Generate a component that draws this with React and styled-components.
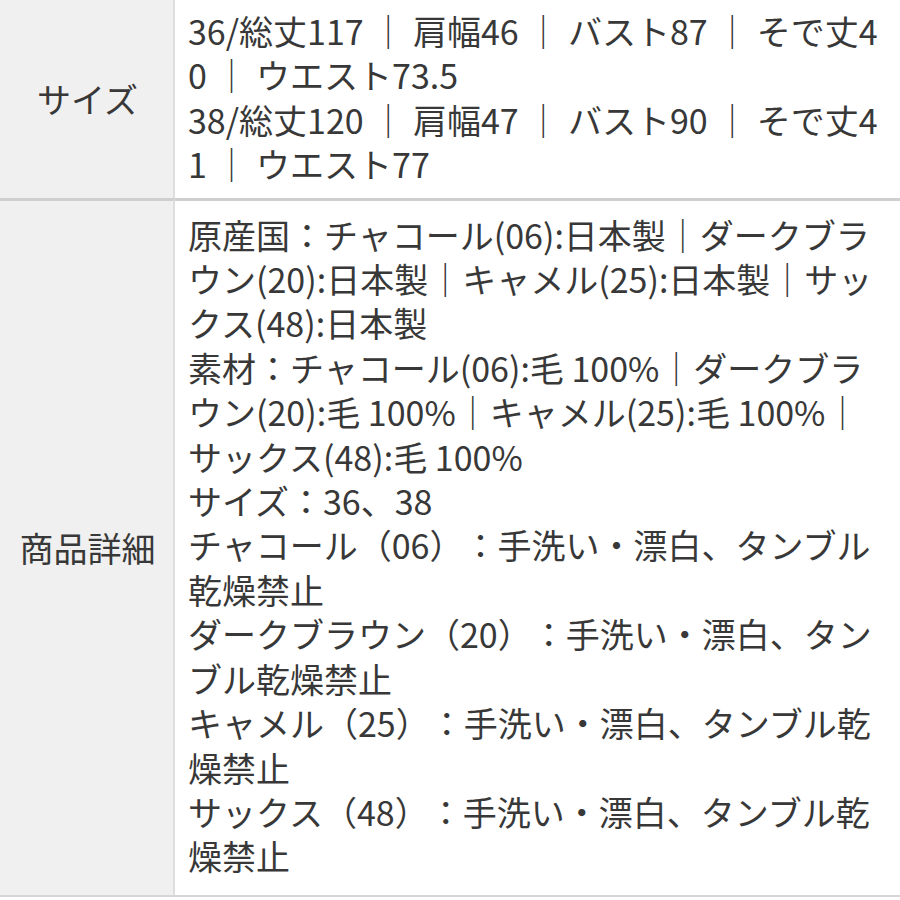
import styled, { createGlobalStyle } from 'styled-components';

const GlobalStyle = createGlobalStyle`
  body {
    margin: 0;
    background: #fff;
    font-family: "Noto Sans CJK JP", "Noto Sans", sans-serif;
    color: #383838;
  }
`;

const Table = styled.div`
  display: grid;
  grid-template-columns: 175px 1fr;
  width: 900px;
  border-bottom: 2px solid #d6d6d6;
`;

const Head = styled.div`
  display: flex;
  align-items: center;
  justify-content: center;
  background: #f0f0f0;
  border-right: 2px solid #dedede;
  border-top: ${p => (p.first ? 'none' : '3px solid #cfcfcf')};
  font-size: 34px;
  padding-left: 2px;
`;

const Cell = styled.div`
  padding: ${p => p.pad};
  padding-left: 13px;
  padding-right: 8px;
  border-top: ${p => (p.first ? 'none' : '3px solid #cfcfcf')};
  font-size: 34px;
  line-height: 44.4px;
  word-break: break-all;
  text-spacing-trim: space-all;
`;

const Line = styled.div``;

const sizes = [
  '36/総丈117 ｜ 肩幅46 ｜ バスト87 ｜ そで丈40 ｜ ウエスト73.5',
  '38/総丈120 ｜ 肩幅47 ｜ バスト90 ｜ そで丈41 ｜ ウエスト77',
];

const details = [
  '原産国：チャコール(06):日本製｜ダークブラウン(20):日本製｜キャメル(25):日本製｜サックス(48):日本製',
  '素材：チャコール(06):毛 100%｜ダークブラウン(20):毛 100%｜キャメル(25):毛 100%｜サックス(48):毛 100%',
  'サイズ：36、38',
  'チャコール（06）：手洗い・漂白、タンブル乾燥禁止',
  'ダークブラウン（20）：手洗い・漂白、タンブル乾燥禁止',
  'キャメル（25）：手洗い・漂白、タンブル乾燥禁止',
  'サックス（48）：手洗い・漂白、タンブル乾燥禁止',
];

export default function App() {
  return (
    <>
      <GlobalStyle />
      <Table>
        <Head first>サイズ</Head>
        <Cell first pad="9px 0 11px">
          {sizes.map((s, i) => <Line key={i}>{s}</Line>)}
        </Cell>
        <Head>商品詳細</Head>
        <Cell pad="12px 0 16px">
          {details.map((s, i) => <Line key={i}>{s}</Line>)}
        </Cell>
      </Table>
    </>
  );
}
